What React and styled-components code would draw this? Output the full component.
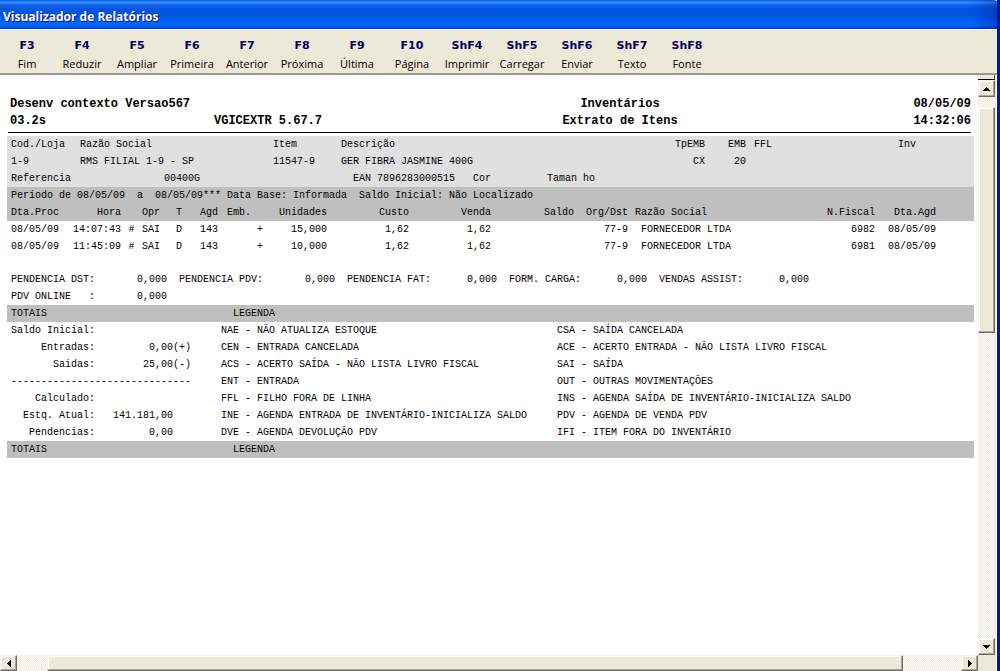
import React from 'react'
import styled, { createGlobalStyle } from 'styled-components'

const GlobalStyle = createGlobalStyle`
  * {
    box-sizing: border-box;
  }
  body {
    margin: 0;
    background: #fff;
  }
`

const Window = styled.div`
  display: flex;
  flex-direction: column;
  height: 100vh;
  overflow: hidden;
  border-right: 3px solid #0018a2;
  background: #ece9d8;
`

const TitleBar = styled.header`
  height: 29px;
  flex: none;
  display: flex;
  align-items: center;
  padding: 4px 3px 0;
  margin-right: -3px;
  border-top-right-radius: 7px;
  background:
    linear-gradient(to right, transparent calc(100% - 30px), rgba(0, 20, 150, 0.4)),
    linear-gradient(
      #0058ee 0%,
      #3f8ff5 8%,
      #0a63ea 18%,
      #0054e0 32%,
      #0055e5 55%,
      #0066ff 80%,
      #0062f4 90%,
      #003dbd 100%
    );
`

const Title = styled.h1`
  margin: 0;
  font: bold 12px/16px 'Open Sans', 'Noto Sans', sans-serif;
  color: #fff;
  text-shadow: 1px 1px 0 #0f1089;
`

const Toolbar = styled.nav`
  height: 46px;
  flex: none;
  display: flex;
  padding-top: 8px;
  border-top: 1px solid #fff;
  border-bottom: 2px solid #9d9b8f;
  background: #ece9d8;
`

const ToolButton = styled.button`
  width: 55px;
  padding: 0 1px 0 0;
  border: 0;
  background: none;
  display: flex;
  flex-direction: column;
  align-items: center;
  gap: 2px;
  cursor: pointer;
`

const Key = styled.span`
  font: bold 11px/16px 'DejaVu Sans', sans-serif;
  color: #00005c;
`

const Label = styled.span`
  font: 11px/16px 'Open Sans', 'Noto Sans', sans-serif;
  color: #000;
`

const Viewer = styled.div`
  flex: 1;
  min-height: 0;
  display: grid;
  grid-template-columns: minmax(0, 1fr) 17px;
  grid-template-rows: minmax(0, 1fr) 16px;
  padding-right: 1px;
  border-right: 1px solid #fff;
`

const Page = styled.main`
  overflow: hidden;
  padding: 21px 4px 0 7px;
  background: #fff;
  color: #000;
  font: 10px/17px 'Liberation Mono', monospace;
  white-space: pre;
`

const ReportHead = styled.div`
  display: grid;
  grid-template-columns: 204px 1fr 224px 239px;
  margin: 0 3px 3px 1px;
  padding: 0 0 2px 2px;
  border-bottom: 1px solid #000;
  font-size: 12px;
  font-weight: bold;
`

const HeadCell = styled.span`
  text-align: ${({ $align }) => $align || 'left'};
`

const ItemPanel = styled.section`
  background: #e0e0e0;
`

const Table = styled.table`
  width: 100%;
  table-layout: fixed;
  border-collapse: collapse;
`

const Col = styled.col`
  width: ${({ $w }) => ($w ? `${$w}px` : 'auto')};
`

const cell = ({ $align, $pad }) => `
  padding: 0 0 0 ${$pad || 0}px;
  text-align: ${$align || 'left'};
  font-weight: normal;
`

const Th = styled.th`
  ${cell}
`

const Td = styled.td`
  ${cell}
`

const DarkHead = styled.thead`
  background: #bfbfbf;
`

const Reference = styled.div`
  display: grid;
  grid-template-columns: 153px 189px 120px 74px 1fr;
  padding-left: 4px;
`

const Pending = styled.dl`
  display: flex;
  flex-wrap: wrap;
  column-gap: 12px;
  margin: 16px 0 0;
  padding-left: 4px;
`

const PendingItem = styled.div`
  display: flex;
  justify-content: space-between;
  width: ${({ $w }) => $w}px;
`

const Value = styled.dd`
  margin: 0;
`

const SectionBar = styled.div`
  display: grid;
  grid-template-columns: 222px 1fr;
  padding-left: 4px;
  background: #bfbfbf;
`

const Summary = styled.section`
  display: grid;
  grid-template-columns: 210px 336px 1fr;
  padding-left: 4px;
`

const Totals = styled.dl`
  margin: 0;
`

const TotalRow = styled.div`
  display: grid;
  grid-template-columns: 84px 78px 1fr;
  min-height: 17px;
  text-align: right;
`

const Sign = styled.span`
  text-align: left;
`

const Legend = styled.ul`
  margin: 0;
  padding: 0;
  list-style: none;
`

const dither = 'repeating-conic-gradient(#fff 0 25%, #ece9d8 0 50%) 0 0 / 2px 2px'

const VerticalBar = styled.div`
  display: flex;
  flex-direction: column;
  background: ${dither};
`

const HorizontalBar = styled.div`
  display: flex;
  background: ${dither};
`

const raised = `
  border: 1px solid;
  border-color: #f6f4ea #6f6c5e #6f6c5e #f6f4ea;
  box-shadow: inset -1px -1px 0 #aca899, inset 1px 1px 0 #fff;
  background: #ece9d8;
`

const ArrowButton = styled.button`
  ${raised}
  width: 17px;
  height: ${({ $h }) => $h || 17}px;
  flex: none;
  padding: 0;
  display: flex;
  align-items: center;
  justify-content: center;
`

const SplitHandle = styled.div`
  height: 5px;
  flex: none;
  background: #ece9d8;
  border-right: 1px solid #444;
  border-bottom: 1px solid #000;
`

const VerticalThumb = styled.div`
  ${raised}
  flex: 224;
`

const HorizontalThumb = styled.div`
  ${raised}
  flex: 856;
`

const Gap = styled.div`
  flex: ${({ $grow }) => $grow};
`

const Corner = styled.div`
  background: #ece9d8;
`

const commands = [
  ['F3', 'Fim'],
  ['F4', 'Reduzir'],
  ['F5', 'Ampliar'],
  ['F6', 'Primeira'],
  ['F7', 'Anterior'],
  ['F8', 'Próxima'],
  ['F9', 'Última'],
  ['F10', 'Página'],
  ['ShF4', 'Imprimir'],
  ['ShF5', 'Carregar'],
  ['ShF6', 'Enviar'],
  ['ShF7', 'Texto'],
  ['ShF8', 'Fonte'],
]

const itemColumns = [
  { title: 'Cod./Loja', value: '1-9', w: 73, pad: 4 },
  { title: 'Razão Social', value: 'RMS FILIAL 1-9 - SP', w: 193 },
  { title: 'Item', value: '11547-9', w: 68 },
  { title: 'Descrição', value: 'GER FIBRA JASMINE 400G' },
  { title: 'TpEMB', value: 'CX', w: 30, align: 'right' },
  { title: 'EMB', value: '20', w: 41, align: 'right' },
  { title: 'FFL', value: '', w: 152, pad: 8 },
  { title: 'Inv', value: '', w: 76 },
]

const moveColumns = [
  { title: 'Dta.Proc', w: 66, pad: 4 },
  { title: 'Hora', w: 48, align: 'right' },
  { title: '', w: 21, align: 'center' },
  { title: 'Opr', w: 34 },
  { title: 'T', w: 24 },
  { title: 'Agd', w: 27 },
  { title: 'Emb.', w: 36, rowAlign: 'right' },
  { title: 'Unidades', w: 64, align: 'right' },
  { title: 'Custo', w: 82, align: 'right' },
  { title: 'Venda', w: 82, align: 'right' },
  { title: 'Saldo', w: 83, align: 'right' },
  { title: 'Org/Dst', w: 54, align: 'right' },
  { title: 'Razão Social', pad: 7, rowPad: 13 },
  { title: 'N.Fiscal', w: 60, align: 'right' },
  { title: 'Dta.Agd', w: 61, align: 'right' },
  { title: '', w: 38 },
]

const moves = [
  ['08/05/09', '14:07:43', '#', 'SAI', 'D', '143', '+', '15,000', '1,62', '1,62', '', '77-9', 'FORNECEDOR LTDA', '6982', '08/05/09', ''],
  ['08/05/09', '11:45:09', '#', 'SAI', 'D', '143', '+', '10,000', '1,62', '1,62', '', '77-9', 'FORNECEDOR LTDA', '6981', '08/05/09', ''],
]

const pending = [
  ['PENDENCIA DST:', 156],
  ['PENDENCIA PDV:', 156],
  ['PENDENCIA FAT:', 150],
  ['FORM. CARGA:', 138],
  ['VENDAS ASSIST:', 150],
  ['PDV ONLINE   :', 156],
]

const totals = [
  ['Saldo Inicial:', '', ''],
  ['Entradas:', '0,00', '(+)'],
  ['Saidas:', '25,00', '(-)'],
  null,
  ['Calculado:', '', ''],
  ['Estq. Atual:', '141.181,00', ''],
  ['Pendencias:', '0,00', ''],
]

const legendLeft = [
  'NAE - NÃO ATUALIZA ESTOQUE',
  'CEN - ENTRADA CANCELADA',
  'ACS - ACERTO SAÍDA - NÃO LISTA LIVRO FISCAL',
  'ENT - ENTRADA',
  'FFL - FILHO FORA DE LINHA',
  'INE - AGENDA ENTRADA DE INVENTÁRIO-INICIALIZA SALDO',
  'DVE - AGENDA DEVOLUÇÃO PDV',
]

const legendRight = [
  'CSA - SAÍDA CANCELADA',
  'ACE - ACERTO ENTRADA - NÃO LISTA LIVRO FISCAL',
  'SAI - SAÍDA',
  'OUT - OUTRAS MOVIMENTAÇÕES',
  'INS - AGENDA SAÍDA DE INVENTÁRIO-INICIALIZA SALDO',
  'PDV - AGENDA DE VENDA PDV',
  'IFI - ITEM FORA DO INVENTÁRIO',
]

const arrows = {
  up: 'M0 4h7v-1h-1v-1h-1v-1h-1v-1h-1v1h-1v1h-1v1h-1z',
  down: 'M0 0h7v1h-1v1h-1v1h-1v1h-1v-1h-1v-1h-1v-1h-1z',
  left: 'M4 0v7h-1v-1h-1v-1h-1v-1h-1v-1h1v-1h1v-1h1v-1z',
  right: 'M0 0v7h1v-1h1v-1h1v-1h1v-1h-1v-1h-1v-1h-1v-1z',
}

function Arrow({ dir, label, height }) {
  const flat = dir === 'up' || dir === 'down'
  const w = flat ? 7 : 4
  const h = flat ? 4 : 7
  return (
    <ArrowButton aria-label={label} $h={height}>
      <svg width={w} height={h} viewBox={`0 0 ${w} ${h}`} shapeRendering="crispEdges">
        <path d={arrows[dir]} fill="#000" />
      </svg>
    </ArrowButton>
  )
}

function Section() {
  return (
    <SectionBar>
      <span>TOTAIS</span>
      <span>LEGENDA</span>
    </SectionBar>
  )
}

function ItemInfo() {
  return (
    <ItemPanel>
      <Table>
        <colgroup>
          {itemColumns.map((c) => <Col key={c.title} $w={c.w} />)}
        </colgroup>
        <thead>
          <tr>
            {itemColumns.map((c) => <Th key={c.title} $align={c.align} $pad={c.pad}>{c.title}</Th>)}
          </tr>
        </thead>
        <tbody>
          <tr>
            {itemColumns.map((c) => <Td key={c.title} $align={c.align} $pad={c.pad}>{c.value}</Td>)}
          </tr>
        </tbody>
      </Table>
      <Reference>
        <span>Referencia</span>
        <span>00400G</span>
        <span>EAN 7896283000515</span>
        <span>Cor</span>
        <span>Taman ho</span>
      </Reference>
    </ItemPanel>
  )
}

function Movements() {
  return (
    <Table>
      <colgroup>
        {moveColumns.map((c, i) => <Col key={i} $w={c.w} />)}
      </colgroup>
      <DarkHead>
        <tr>
          <Th colSpan={moveColumns.length} $pad={4}>
            {'Período de 08/05/09  a  08/05/09*** Data Base: Informada  Saldo Inicial: Não Localizado'}
          </Th>
        </tr>
        <tr>
          {moveColumns.map((c, i) => <Th key={i} $align={c.align} $pad={c.pad}>{c.title}</Th>)}
        </tr>
      </DarkHead>
      <tbody>
        {moves.map((row) => (
          <tr key={row[1]}>
            {row.map((text, i) => {
              const c = moveColumns[i]
              return <Td key={i} $align={c.rowAlign || c.align} $pad={c.rowPad || c.pad}>{text}</Td>
            })}
          </tr>
        ))}
      </tbody>
    </Table>
  )
}

function App() {
  return (
    <Window>
      <GlobalStyle />
      <TitleBar>
        <Title>Visualizador de Relatórios</Title>
      </TitleBar>
      <Toolbar>
        {commands.map(([key, label]) => (
          <ToolButton key={key}>
            <Key>{key}</Key>
            <Label>{label}</Label>
          </ToolButton>
        ))}
      </Toolbar>
      <Viewer>
        <Page>
          <ReportHead>
            <HeadCell>Desenv contexto Versao567</HeadCell>
            <HeadCell />
            <HeadCell $align="center">Inventários</HeadCell>
            <HeadCell $align="right">08/05/09</HeadCell>
            <HeadCell>03.2s</HeadCell>
            <HeadCell>VGICEXTR 5.67.7</HeadCell>
            <HeadCell $align="center">Extrato de Itens</HeadCell>
            <HeadCell $align="right">14:32:06</HeadCell>
          </ReportHead>
          <ItemInfo />
          <Movements />
          <Pending>
            {pending.map(([name, w]) => (
              <PendingItem key={name} $w={w}>
                <dt>{name}</dt>
                <Value>0,000</Value>
              </PendingItem>
            ))}
          </Pending>
          <Section />
          <Summary>
            <Totals>
              {totals.map((t, i) =>
                t ? (
                  <TotalRow key={i}>
                    <dt>{t[0]}</dt>
                    <Value>{t[1]}</Value>
                    <Sign>{t[2]}</Sign>
                  </TotalRow>
                ) : (
                  <div key={i}>{'-'.repeat(30)}</div>
                )
              )}
            </Totals>
            <Legend>
              {legendLeft.map((l) => <li key={l}>{l}</li>)}
            </Legend>
            <Legend>
              {legendRight.map((l) => <li key={l}>{l}</li>)}
            </Legend>
          </Summary>
          <Section />
        </Page>
        <VerticalBar>
          <SplitHandle />
          <Arrow dir="up" label="Rolar para cima" />
          <Gap $grow={10} />
          <VerticalThumb />
          <Gap $grow={306} />
          <Arrow dir="down" label="Rolar para baixo" />
        </VerticalBar>
        <HorizontalBar>
          <Arrow dir="left" label="Rolar para a esquerda" height={16} />
          <Gap $grow={30} />
          <HorizontalThumb />
          <Gap $grow={58} />
          <Arrow dir="right" label="Rolar para a direita" height={16} />
        </HorizontalBar>
        <Corner />
      </Viewer>
    </Window>
  )
}

export default App
